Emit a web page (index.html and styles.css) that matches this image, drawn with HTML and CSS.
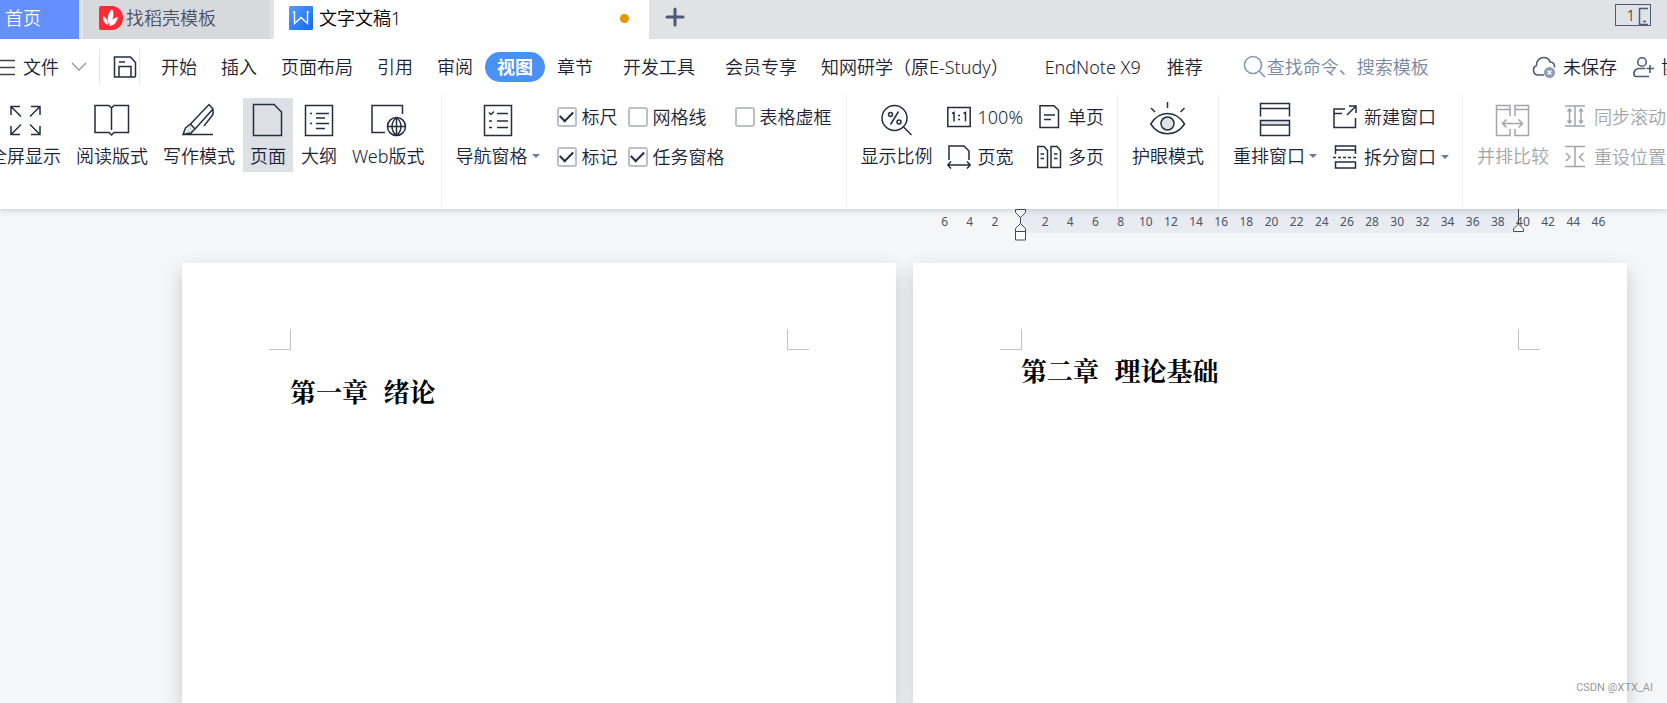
FILE: index.html
```html
<!DOCTYPE html>
<html lang="zh-CN">
<head>
<meta charset="utf-8">
<title>文字文稿1</title>
<link rel="stylesheet" href="styles.css">
</head>
<body>
<div class="app">
  <nav class="tabs" aria-label="文档标签">
    <button class="tab tab-home">首页</button>
    <button class="tab tab-template">
      <svg class="tab-icon" viewBox="0 0 24 24"><path d="M2 0h11a11 12 0 0 1 0 24H2a2 2 0 0 1-2-2V2a2 2 0 0 1 2-2z" fill="#ff2a35"/><path d="M10 18C7 14 9 7 13 3c3 5 1 12-3 15zM9 19c-3-1-5-4-5-9 3 1 5 5 5 9zM10 20c1-5 4-8 9-9-1 5-4 9-9 9z" fill="#fff"/></svg>
      <span>找稻壳模板</span>
    </button>
    <button class="tab tab-doc">
      <svg class="tab-icon" viewBox="0 0 24 24"><defs><linearGradient id="w" x1="0" y1="0" x2="1" y2="1"><stop offset="0" stop-color="#5a9bff"/><stop offset="1" stop-color="#0f6cf0"/></linearGradient></defs><rect width="24" height="24" rx="1" fill="url(#w)"/><path d="M4 6h1.500v11.500l6.500-6 6.500 6V6H20" fill="none" stroke="#fff" stroke-width="1.4"/></svg>
      <span>文字文稿1</span>
      <i class="dirty"></i>
    </button>
    <button class="tab-add" aria-label="新建"><svg width="20" height="20" viewBox="0 0 20 20"><path d="M10 2v16M2 10h16" stroke="#4b5a78" stroke-width="3" stroke-linecap="round"/></svg></button>
    <button class="devices"><span>1</span><svg width="12" height="20" viewBox="0 0 12 20"><path d="M10 3.500H1.500v16H10M5 16.500h3" fill="none" stroke="#4b5a78" stroke-width="1.500"/></svg></button>
  </nav>

  <div class="menu">
    <button class="file">
      <svg width="15" height="18" viewBox="0 0 15 18"><path d="M0 2.500h15M0 9.500h15M0 16.500h15" stroke="#444" stroke-width="1.300"/></svg>
      <span>文件</span>
      <svg class="chev" width="16" height="10" viewBox="0 0 16 10"><path d="M1 1l7 7 7-7" fill="none" stroke="#8f949c" stroke-width="1.300"/></svg>
    </button>
    <button class="save" aria-label="保存"><svg width="24" height="24" viewBox="0 0 24 24" class="ln"><path d="M1.500 2h16l5 5.500V21a1 1 0 0 1-1 1h-20zM6 22V11.500h12V22M6 7h6"/></svg></button>
    <div class="menu-items">
      <button>开始</button><button>插入</button><button>页面布局</button><button>引用</button><button>审阅</button><button class="current">视图</button><button>章节</button><button class="apart">开发工具</button><button class="apart">会员专享</button><button>知网研学（原E-Study）</button><button class="far">EndNote X9</button><button>推荐</button>
    </div>
    <label class="search">
      <svg width="24" height="24" viewBox="0 0 24 24"><circle cx="10" cy="10" r="8.500"/><path d="M16 16l6 6"/></svg>
      <input type="text" aria-label="搜索" placeholder="查找命令、搜索模板">
    </label>
    <div class="status">
      <button><svg width="26" height="24" viewBox="0 0 26 24"><path d="M13 20H6.500a5 5 0 0 1-1-9.500C5 6 9 2 13.500 2.500c3 .3 5 2.300 5.500 4.500 3.500 0 5 3 4.500 5.500" fill="none" stroke="#4b5a78" stroke-width="1.600"/><circle cx="18.500" cy="17.500" r="5.500" fill="#8c9bb7"/><path d="M16.500 15.500l4 4m0-4l-4 4" stroke="#fff" stroke-width="1.300"/></svg><span>未保存</span></button>
      <button><svg width="22" height="22" viewBox="0 0 22 22" fill="none" stroke="#4b5a78" stroke-width="1.600"><circle cx="9" cy="6" r="4.300"/><path d="M12.500 12.500H6A5 5 0 0 0 1 18c0 2 1 2.500 2 2.500h13M17 9v8M13.500 12.500H21"/></svg><span>协作</span></button>
    </div>
  </div>

  <div class="ribbon">
    <div class="group first">
      <button class="big"><svg class="ic" viewBox="0 0 36 36"><path d="M4 13V4.500h9M4 4.500l10 10M24 4.500h9V13M33 4.500l-10 10M4 24v8.500h9M4 32.500l10-10M24 32.500h9V24M33 32.500l-10-10"/></svg><span>全屏显示</span></button>
      <button class="big"><svg class="ic" viewBox="0 0 36 36"><path d="M17.500 6L15 3.500H1v27h14l2.500 2.500 2.500-2.500h14.500v-27H20L17.500 6zV28"/></svg><span>阅读版式</span></button>
      <button class="big"><svg class="ic" viewBox="0 0 36 36"><path d="M9 23l-5 9 9-3z" fill="#dcdfe4" stroke="none"/><path d="M3 32.500h29M9.500 22L28 2.500l4 4.500L14 27M9.500 22l4.500 5-4 4-8 1.500 2.500-6.500zM9.500 22l-5 4M32 7.500v5L23 24"/></svg><span>写作模式</span></button>
      <button class="big on"><svg class="ic" viewBox="0 0 36 36"><path d="M3.500 2.500H24l7.500 7.500v23.500h-28z"/></svg><span>页面</span></button>
      <button class="big"><svg class="ic" viewBox="0 0 36 36"><path d="M4.500 3.500h27v30h-27zM9 11.500h2M15 11.500h13M15 16h9M9 21.500h2M15 21.500h13M15 26.500h9"/></svg><span>大纲</span></button>
      <button class="big"><svg class="ic" viewBox="0 0 36 36"><path d="M15 30.500H2v-27h30.500V12"/><circle cx="26.500" cy="24.500" r="9"/><path d="M18 24.500h17M26.500 15.500v18M26.500 15.500c-6 5-6 13 0 18M26.500 15.500c6 5 6 13 0 18"/></svg><span>Web版式</span></button>
    </div>
    <div class="group">
      <button class="big"><svg class="ic" viewBox="0 0 36 36"><path d="M4.500 3.500h27v30h-27zM9 10.500l2 2 3-3M17 11.500h11M9 19h3M17 19h11M9 25.500h3M17 25.500h11"/></svg><span>导航窗格<i class="arrow"></i></span></button>
      <div class="checks">
        <label><input type="checkbox" checked>标尺</label>
        <label><input type="checkbox">网格线</label>
        <label><input type="checkbox">表格虚框</label>
        <label><input type="checkbox" checked>标记</label>
        <label><input type="checkbox" checked>任务窗格</label>
      </div>
    </div>
    <div class="group">
      <button class="big"><svg class="ic" viewBox="0 0 36 36"><circle cx="15.500" cy="16" r="12.500"/><path d="M24.500 25l8 8M19.500 9.500l-8 13"/><circle cx="11.500" cy="12.500" r="2"/><circle cx="20" cy="20" r="2"/></svg><span>显示比例</span></button>
      <div class="pairs zoom-pairs">
        <button class="small"><svg class="ics" viewBox="0 0 24 24"><path d="M.8 2.500h22.400v19H.8zM5 8.500l2-1v9M16.500 8.500l2-1v9M11 10.500h2M11 14.500h2"/></svg>100%</button>
        <button class="small"><svg class="ics" viewBox="0 0 24 24"><path d="M3 .8h14l4.500 4.500V22.500H3z"/><path d="M7 10h11M7 14.500h7"/></svg>单页</button>
        <button class="small"><svg class="ics" viewBox="0 0 24 24"><path d="M2 15V1h15l5 5v9M1 20h22M4 16.500L.8 20 4 23.500M20 16.500l3.200 3.500-3.200 3.500"/></svg>页宽</button>
        <button class="small"><svg class="ics" viewBox="0 0 24 24"><path d="M.8 1.500H7l3.500 4v17H.8zM14 1.500h6l3.500 4v17H14zM3.500 9h3.500M3.500 13.500h3.500M17 9h3.500M17 13.500h3.500"/></svg>多页</button>
      </div>
    </div>
    <div class="group">
      <button class="big"><svg class="ic" viewBox="0 0 36 36"><path d="M.8 22C9 8 26 8 34.500 22 26 35 9 35 .8 22zM17.500 0v6M1 6l4 4M34.500 6l-4 4"/><circle cx="17.500" cy="21.500" r="6.500" fill="#dfe2e6"/></svg><span>护眼模式</span></button>
    </div>
    <div class="group">
      <button class="big"><svg class="ic" viewBox="0 0 36 36"><path d="M4 19h28v3H4z" fill="#dde1e6" stroke="none"/><path d="M3.500 14.500V1.500h29v13M3.500 6.500h29M3.500 18.500h29v15h-29zM3.500 23h29"/></svg><span>重排窗口<i class="arrow"></i></span></button>
      <div class="pairs window-pairs">
        <button class="small"><svg class="ics" viewBox="0 0 24 24"><path d="M12 4H1v18.500h21.500V13M1 8.500h8M14 10l9-9M16 1h7v7"/></svg>新建窗口</button>
        <button class="small"><svg class="ics" viewBox="0 0 24 24"><path d="M2.500 9V1h20v8M2.500 5h20M2.500 23v-6h20v6z"/><path d="M0 12.500h24" stroke-dasharray="3 2"/></svg>拆分窗口<i class="arrow"></i></button>
      </div>
    </div>
    <div class="group disabled">
      <button class="big" disabled><svg class="ic" viewBox="0 0 36 36"><path d="M15 14V3.500H1.500v30H15V27M1.500 7.500H15M20 14V3.500h13.500v30H20V27M20 7.500h13.500M8 21.500h19M11.500 17.500l-4 4 4 4M23.500 17.500l4 4-4 4"/></svg><span>并排比较</span></button>
      <div class="pairs sync-pairs">
        <button class="small" disabled><svg class="ics" viewBox="0 0 24 24"><path d="M2 1h20M2 21h20M12 1v20M6.500 4v14M4.500 6.500l2-2.500 2 2.500M4.500 15.500l2 2.500 2-2.500M18 4v14M16 6.500l2-2.500 2 2.500M16 15.500l2 2.500 2-2.500"/></svg>同步滚动</button>
        <button class="small" disabled><svg class="ics" viewBox="0 0 24 24"><path d="M2 1.500h20M2 21.500h20M12 1.500v20M3 8l4 4-4 4M20.500 8l-4 4 4 4"/></svg>重设位置</button>
      </div>
    </div>
  </div>

  <main class="workspace">
    <div class="ruler">
      <div class="band"></div>
      <span>6</span><span>4</span><span>2</span><span></span><span>2</span><span>4</span><span>6</span><span>8</span><span>10</span><span>12</span><span>14</span><span>16</span><span>18</span><span>20</span><span>22</span><span>24</span><span>26</span><span>28</span><span>30</span><span>32</span><span>34</span><span>36</span><span>38</span><span>40</span><span>42</span><span>44</span><span>46</span>
      <svg class="mark mark-left" width="13" height="32" viewBox="0 0 13 32"><path d="M6.500 8v8" /><path d="M1.500.5h10v3l-5 5-5-5zM6.500 14.500l5 5v11.500h-10V19.500zM1.500 22.500h10" fill="#fff"/></svg>
      <svg class="mark mark-right" width="13" height="32" viewBox="0 0 13 32"><path d="M6.500 0v16"/><path d="M6.500 15l5 5v2.500h-10V20z" fill="#fff"/></svg>
    </div>
    <div class="pages">
      <article class="page">
        <div class="crops"><i class="crop"></i><i class="crop crop-r"></i></div>
        <h1 class="spaced">第一章 绪论</h1>
      </article>
      <article class="page">
        <div class="crops"><i class="crop"></i><i class="crop crop-r"></i></div>
        <h1>第二章 理论基础</h1>
      </article>
    </div>
    <div class="watermark">CSDN @XTX_AI</div>
  </main>
</div>
</body>
</html>
```
FILE: styles.css
```css
* { box-sizing: border-box; }

body {
  margin: 0;
  overflow: hidden;
  color: #1c2336;
  font: 350 18px/24px "Noto Sans", "Noto Sans CJK SC", sans-serif;
}

button {
  margin: 0;
  padding: 0;
  border: 0;
  background: none;
  color: inherit;
  font: inherit;
  white-space: nowrap;
}

svg { display: block; flex: none; overflow: visible; }

.app { display: flex; flex-direction: column; height: 100vh; background: #fff; }

/* Document tabs */
.tabs { display: flex; flex: none; height: 39px; background: #e1e2e6; }
.tab { display: flex; align-items: center; gap: 6px; padding-bottom: 3px; }
.tab-icon { width: 24px; height: 24px; }
.tab-home { width: 79px; padding-left: 5px; background: #638fff; color: #fff; }
.tab-template {
  width: 187px;
  margin: 0 4px;
  padding-left: 16px;
  gap: 3px;
  background: #d8d9dd;
  color: #4a5264;
}
.tab-doc { width: 375px; padding-left: 15px; background: #fff; color: #000; }
.dirty { width: 9px; height: 9px; margin: 0 20px 0 auto; border-radius: 50%; background: #e69600; }
.tab-add { padding: 0 16px 6px; }
.devices {
  display: flex;
  align-self: flex-start;
  justify-content: flex-end;
  gap: 3px;
  width: 36px;
  height: 22px;
  margin: 4px 16px 0 auto;
  border: 1px solid #4b5a78;
  font-size: 15px;
  line-height: 20px;
}

/* Menu row */
.menu { display: flex; flex: none; align-items: center; height: 55px; padding-top: 1px; }
.file { display: flex; align-items: center; gap: 8px; width: 99px; }
.chev { margin-left: 4px; }
.save {
  height: 36px;
  width: 41px;
  padding-left: 13px;
  border: solid #e3e5e8;
  border-width: 0 1px;
}
.ln, .ic, .ics { fill: none; stroke: #262d40; stroke-width: 1.5; }
.menu-items { display: flex; margin-left: 9px; }
.menu-items button { height: 30px; padding: 0 12px; }
.menu-items .current { border-radius: 15px; background: #4991f2; color: #fff; font-weight: 700; }
.menu-items .apart { margin-left: 6px; }
.menu-items .far { margin: 0 2px 0 12px; }
.search { display: flex; align-items: center; margin-left: 28px; color: #7786a3; }
.search svg { fill: none; stroke: #8796b3; stroke-width: 1.6; }
.search input {
  width: 180px;
  padding: 0;
  border: 0;
  outline: 0;
  background: none;
  color: inherit;
  font: inherit;
}
.search ::placeholder { color: #7786a3; opacity: 1; }
.status { display: flex; flex: none; gap: 16px; margin: 0 -30px 0 auto; }
.status button { display: flex; align-items: center; gap: 6px; color: #1a2030; }

/* Ribbon */
.ribbon {
  position: relative;
  z-index: 1;
  display: flex;
  flex: none;
  height: 115px;
  padding: 1px 0 3px;
  background: #fff;
  box-shadow: 0 1px 6px rgba(60, 66, 80, .25);
  clip-path: inset(0 0 -8px 0);
}
.group {
  display: flex;
  flex: none;
  align-items: flex-start;
  padding: 3px 7px 0;
  border-right: 1px solid #eeeff1;
}
.group.first { gap: 1px; margin-left: -25px; padding-right: 9px; }
.big {
  display: flex;
  flex-direction: column;
  align-items: center;
  gap: 6px;
  height: 74px;
  padding: 4px 7px;
}
.big.on { background: #dde1e6; }
.ic { width: 36px; height: 36px; }
.ics { width: 24px; height: 24px; }
.arrow {
  display: inline-block;
  margin-left: 4px;
  border: 4px solid transparent;
  border-top-color: #6b7b96;
  border-bottom: 0;
  vertical-align: 5px;
}
.small .arrow { margin-left: -2px; }
.checks {
  display: grid;
  grid-template-columns: repeat(3, auto);
  grid-auto-rows: 40px;
  column-gap: 10px;
  margin: 0 7px 0 10px;
}
.checks label { display: flex; align-items: center; gap: 5px; height: 38px; white-space: nowrap; }
.checks input {
  display: grid;
  place-items: center;
  width: 20px;
  height: 20px;
  margin: 0;
  border: 2px solid #bcbfc5;
  border-radius: 3px;
  appearance: none;
}
.checks input:checked::before {
  content: "";
  width: 11px;
  height: 6px;
  margin-bottom: 4px;
  border: solid #262d40;
  border-width: 0 0 2px 2px;
  transform: rotate(-45deg);
}
.pairs { display: grid; grid-template-columns: auto; grid-auto-rows: 40px; }
.small { display: flex; align-items: center; gap: 7px; height: 38px; }
.zoom-pairs { grid-template-columns: auto auto; column-gap: 14px; margin: 0 6px 0 7px; }
.window-pairs { margin: 0 6px 0 9px; }
.sync-pairs { margin-left: 7px; }
.disabled { border: 0; color: #a3a5a8; }
.disabled button { color: inherit; }
.disabled svg { stroke: #a3a5a8; }

/* Editing area */
.workspace { position: relative; flex: 1; min-height: 0; background: #f5f6f8; }
.ruler {
  position: relative;
  display: grid;
  grid-template-columns: repeat(27, 1fr);
  height: 24px;
  margin: 0 56px 0 932px;
  color: #4a5468;
  font-size: 12px;
  font-weight: 400;
  line-height: 26px;
  text-align: center;
}
.ruler span { position: relative; }
.band { position: absolute; inset: 0 93px 0 88px; background: #e8ebf1; }
.mark { position: absolute; top: 0; fill: none; stroke: #3f4a60; }
.mark-left { left: 82px; }
.mark-right { right: 86px; }
.pages { display: flex; gap: 17px; height: calc(100% - 24px); padding: 30px 40px 0 182px; }
.page { flex: 1; padding: 66px 87px 0; background: #fff; box-shadow: 0 8px 18px rgba(40, 44, 54, .22); }
.crops { display: flex; justify-content: space-between; }
.crop { width: 22px; height: 21px; border: solid #c3c3c3; border-width: 0 1px 1px 0; }
.crop-r { border-width: 0 0 1px 1px; }
.page h1 {
  margin: 6px 0 0 21px;
  color: #000;
  font: 700 26px/36px "Liberation Mono", "Noto Serif CJK SC", "Noto Sans CJK SC", serif;
}
.page .spaced { margin-top: 27px; }
.watermark {
  position: absolute;
  right: 14px;
  bottom: 5px;
  color: #97999d;
  font: 11px/20px Roboto, sans-serif;
}
```
